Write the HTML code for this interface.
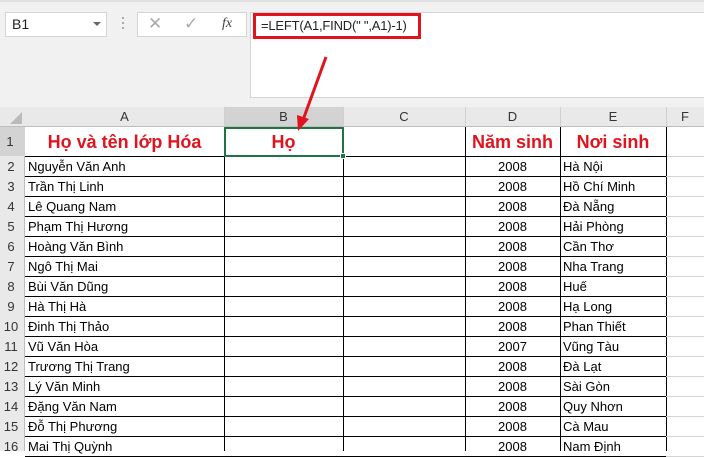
<!DOCTYPE html><html><head><meta charset="utf-8"><style>
*{margin:0;padding:0;box-sizing:border-box}
body{width:704px;height:451px;overflow:hidden;background:#fff;font-family:"Liberation Sans","DejaVu Sans",sans-serif;position:relative}
.a{position:absolute}
.cell{position:absolute;font-size:13px;line-height:20px;color:#000;white-space:nowrap}
</style></head><body>
<div class="a" style="left:0;top:0;width:704px;height:107px;background:#f1f1f1"></div>
<div class="a" style="left:0;top:0;width:704px;height:2px;background:#e0e0e0"></div>
<div class="a" style="left:5px;top:12px;width:102px;height:25px;background:#fff;border:1px solid #d4d4d4"></div>
<div class="cell" style="left:12px;top:14px;font-size:14px;color:#222">B1</div>
<div class="a" style="left:93px;top:22px;width:0;height:0;border-left:4px solid transparent;border-right:4px solid transparent;border-top:4px solid #666"></div>
<div class="a" style="left:122px;top:17px;width:2px;height:2px;background:#aaa;box-shadow:0 5px #aaa,0 10px #aaa"></div>
<div class="a" style="left:137px;top:12px;width:110px;height:25px;background:#fff;border:1px solid #d4d4d4"></div>
<div class="cell" style="left:148px;top:14px;font-size:17px;color:#aaa">✕</div>
<div class="cell" style="left:184px;top:14px;font-size:17px;color:#aaa">✓</div>
<div class="cell" style="left:222px;top:14px;font-size:14px;font-style:italic;font-family:'Liberation Serif',serif;color:#444">fx</div>
<div class="a" style="left:250px;top:12px;width:454px;height:86px;background:#fff;border-top:1px solid #d4d4d4;border-left:1px solid #d4d4d4;border-bottom:1px solid #d4d4d4"></div>
<div class="a" style="left:253px;top:13px;width:168px;height:26px;border:3px solid #e0141e"></div>
<div class="cell" style="left:261px;top:16px;font-size:13px;letter-spacing:-0.2px;color:#222">=LEFT(A1,FIND(" ",A1)-1)</div>
<div class="a" style="left:0;top:107px;width:704px;height:20px;background:#e9e9e9;border-bottom:1px solid #bdbdbd"></div>
<div class="a" style="left:224px;top:107px;width:119px;height:20px;background:#d3d3d3;border-bottom:1px solid #bdbdbd"></div>
<div class="a" style="left:0;top:127px;width:25px;height:324px;background:#e9e9e9;border-right:1px solid #bdbdbd"></div>
<div class="a" style="left:0;top:127px;width:25px;height:29px;background:#d3d3d3"></div>
<div class="a" style="left:10px;top:112px;width:0;height:0;border-left:12px solid transparent;border-bottom:12px solid #bbb"></div>
<svg class="a" style="left:0;top:107px" width="704" height="344">
<g stroke="#d0d0d0" stroke-width="1">
<line x1="224.5" y1="0" x2="224.5" y2="20"/><line x1="343.5" y1="0" x2="343.5" y2="20"/><line x1="465.5" y1="0" x2="465.5" y2="20"/><line x1="560.5" y1="0" x2="560.5" y2="20"/><line x1="666.5" y1="0" x2="666.5" y2="20"/>
<line x1="666" x2="704" y1="49.5" y2="49.5"/>
</g>
<g stroke="#000" stroke-width="1">
<line x1="25" x2="666" y1="49.5" y2="49.5"/>
</g>
</svg>
<div id="g"></div>
<script>
var rows=[["Nguyễn Văn Anh","2008","Hà Nội"],["Trần Thị Linh","2008","Hồ Chí Minh"],["Lê Quang Nam","2008","Đà Nẵng"],["Phạm Thị Hương","2008","Hải Phòng"],["Hoàng Văn Bình","2008","Cần Thơ"],["Ngô Thị Mai","2008","Nha Trang"],["Bùi Văn Dũng","2008","Huế"],["Hà Thị Hà","2008","Hạ Long"],["Đinh Thị Thảo","2008","Phan Thiết"],["Vũ Văn Hòa","2007","Vũng Tàu"],["Trương Thị Trang","2008","Đà Lạt"],["Lý Văn Minh","2008","Sài Gòn"],["Đặng Văn Nam","2008","Quy Nhơn"],["Đỗ Thị Phương","2008","Cà Mau"],["Mai Thị Quỳnh","2008","Nam Định"]];
var h='';
var cols=[["A",25,224],["B",224,343],["C",343,465],["D",465,560],["E",560,666],["F",666,704]];
cols.forEach(function(c){h+='<div class="cell" style="left:'+c[1]+'px;top:107px;width:'+(c[2]-c[1])+'px;text-align:center;color:#333">'+c[0]+'</div>';});
h+='<div class="cell" style="left:0;top:132px;width:20px;text-align:center;color:#333">1</div>';
[224,343,465,560,666].forEach(function(x){h+='<div class="a" style="left:'+x+'px;top:127px;width:1px;height:324px;background:#000"></div>';});
for(var i=0;i<15;i++){var y=156+20*i;
h+='<div class="a" style="left:25px;top:'+(y+20)+'px;width:641px;height:1px;background:#000"></div>';
h+='<div class="a" style="left:666px;top:'+(y+20)+'px;width:38px;height:1px;background:#d4d4d4"></div>';
h+='<div class="cell" style="left:0;top:'+(y+1)+'px;width:22px;text-align:center;color:#333">'+(i+2)+'</div>';
h+='<div class="cell" style="left:28px;top:'+(y+1)+'px">'+rows[i][0]+'</div>';
h+='<div class="cell" style="left:465px;top:'+(y+1)+'px;width:95px;text-align:center">'+rows[i][1]+'</div>';
h+='<div class="cell" style="left:563px;top:'+(y+1)+'px">'+rows[i][2]+'</div>';}
var r='font-size:18px;font-weight:bold;color:#e0141e;line-height:29px;top:128px;text-align:center';
h+='<div class="cell" style="'+r+';left:25px;width:199px">Họ và tên lớp Hóa</div>';
h+='<div class="cell" style="'+r+';left:224px;width:119px">Họ</div>';
h+='<div class="cell" style="'+r+';left:465px;width:95px">Năm sinh</div>';
h+='<div class="cell" style="'+r+';left:560px;width:106px">Nơi sinh</div>';
h+='<div class="a" style="left:224px;top:127px;width:120px;height:30px;border:2px solid #217346"></div>';
h+='<div class="a" style="left:340px;top:153px;width:6px;height:6px;background:#217346;border:1px solid #fff"></div>';
document.getElementById('g').innerHTML=h;
</script>
<svg class="a" style="left:0;top:0" width="704" height="451">
<line x1="326" y1="57" x2="303" y2="120" stroke="#e0141e" stroke-width="3"/>
<polygon points="298,131 297,115 309,119" fill="#e0141e"/>
</svg>
</body></html>
